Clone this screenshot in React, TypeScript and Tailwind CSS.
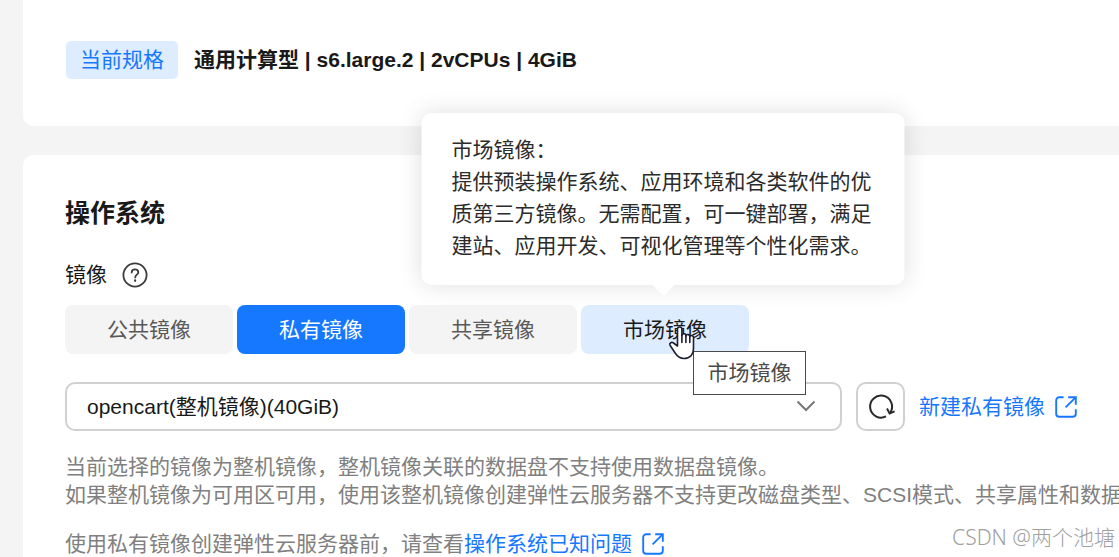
import { useState } from "react";

type ImageKind = { id: string; label: string };

const IMAGE_KINDS: ImageKind[] = [
  { id: "public", label: "公共镜像" },
  { id: "private", label: "私有镜像" },
  { id: "shared", label: "共享镜像" },
  { id: "market", label: "市场镜像" },
];

function HelpIcon() {
  return (
    <svg className="size-[26px]" viewBox="0 0 26 26" fill="none" stroke="#3c3c3c" strokeWidth="1.8" strokeLinecap="round">
      <circle cx="13" cy="13" r="11.6" />
      <path d="M9.7 10.6C9.7 8.6 11.1 7.4 13 7.4s3.3 1.2 3.3 3c0 2.2-3.1 2.4-3.1 5" />
      <path d="M13.1 18.4v.4" strokeWidth="2.2" />
    </svg>
  );
}

function RefreshIcon() {
  return (
    <svg className="size-[28px]" viewBox="0 0 28 28" fill="none" stroke="#2a2a2a" strokeWidth="2">
      <path d="M19 23.400A11 11 0 1 1 23.400 19.400" />
      <path d="M20 15.600L22.600 20.400L27.600 18.300" />
    </svg>
  );
}

function ExternalIcon() {
  return (
    <svg className="size-6 shrink-0" viewBox="0 0 24 24" fill="none" stroke="#1677ff" strokeWidth="1.9">
      <path d="M9.6 2.2H5.2a3 3 0 0 0-3 3v13.6a3 3 0 0 0 3 3h13.6a3 3 0 0 0 3-3v-4.6" />
      <path d="M14.2 2.2h7.6v7.6" />
      <path d="M21.6 2.4L11.6 12.4" />
    </svg>
  );
}

function HandCursor() {
  return (
    <svg className="pointer-events-none absolute left-[87px] top-[20px] z-20 h-[35px] w-[27px]" viewBox="0 0 27 35" fill="#fff" stroke="#1d1f33" strokeWidth="1.6" strokeLinejoin="round" strokeLinecap="round">
      <path d="M9.500 21V4.200a2.200 2.200 0 0 1 4.400 0V10.500a2 2 0 0 1 4 .600a2 2 0 0 1 3.900.900a1.900 1.900 0 0 1 3.700 1V23c0 6.500-3.500 10.500-9.500 10.500c-4.500 0-6.500-2-8.500-5L2 20.300c-1-2.300 1.700-3.800 3.500-2.300z" />
      <path d="M13.900 10.500v7M17.900 11.300v6.200M21.800 12.300v5.200" />
    </svg>
  );
}

function MarketPopover() {
  return (
    <div
      role="tooltip"
      className="absolute bottom-full left-[82px] z-10 mb-5 w-[483px] -translate-x-1/2 rounded-[10px] bg-white px-[30px] pb-[23px] pt-[21px] text-left leading-8 text-[#2b2b2b] shadow-[0_0_24px_rgba(0,0,0,0.13)]"
    >
      <p>市场镜像：</p>
      <p>提供预装操作系统、应用环境和各类软件的优质第三方镜像。无需配置，可一键部署，满足建站、应用开发、可视化管理等个性化需求。</p>
      <svg className="absolute left-1/2 top-full h-[11px] w-[22px] -translate-x-1/2" viewBox="0 0 22 11" fill="#fff">
        <path d="M0 0h22L11 11z" />
      </svg>
    </div>
  );
}

export default function App() {
  const [active, setActive] = useState("private");

  return (
    <div className="relative flex min-h-screen flex-col gap-[29px] overflow-hidden bg-[#f4f4f4] pl-[23px] font-['Liberation_Sans','Noto_Sans_CJK_SC',sans-serif] text-[21px] text-[#191919]">
      <section className="flex items-center gap-4 rounded-bl-[10px] bg-white pb-[47px] pl-[43px] pt-[41px]">
        <span className="rounded-[5px] bg-[#deecff] px-[14px] leading-[38px] text-[#1677ff]">当前规格</span>
        <strong className="font-bold leading-8">通用计算型 | s6.large.2 | 2vCPUs | 4GiB</strong>
      </section>

      <section className="grow rounded-tl-[10px] bg-white pl-[42px] pr-[41px] pt-[42px]">
        <h2 className="text-[25px] font-bold leading-8">操作系统</h2>

        <div className="mt-[33px] flex h-[26px] items-center gap-[15px]">
          <span id="image-label">镜像</span>
          <button type="button" aria-label="帮助">
            <HelpIcon />
          </button>
        </div>

        <div className="mt-[17px] flex gap-1" role="group" aria-labelledby="image-label">
          {IMAGE_KINDS.map(({ id, label }) => (
            <div key={id} className="relative">
              <button
                type="button"
                aria-pressed={active === id}
                onClick={() => setActive(id)}
                className={
                  "h-[49px] w-[168px] rounded-lg " +
                  (active === id
                    ? "bg-[#1677ff] text-white"
                    : id === "market"
                      ? "bg-[#deecff] text-[#191919]"
                      : "bg-[#f4f4f4] text-[#595959]")
                }
              >
                {label}
              </button>
              {id === "market" && (
                <>
                  <MarketPopover />
                  <HandCursor />
                  <div className="absolute left-28 top-[46px] z-10 w-[113px] whitespace-nowrap border border-[#4a4a4a] bg-white text-center leading-[42px] text-[#4a4a4a]">
                    市场镜像
                  </div>
                </>
              )}
            </div>
          ))}
        </div>

        <div className="mt-7 flex items-center gap-[14px]">
          <div className="relative grow">
            <select
              aria-labelledby="image-label"
              className="block h-[49px] w-full appearance-none rounded-[10px] border-2 border-[#d0d0d0] bg-white pl-5 pr-14"
            >
              <option>opencart(整机镜像)(40GiB)</option>
            </select>
            <svg className="pointer-events-none absolute right-[26px] top-[18px] h-3 w-5" viewBox="0 0 20 12" fill="none" stroke="#777" strokeWidth="2">
              <path d="M1.500 1.500L10 10l8.500-8.500" />
            </svg>
          </div>
          <button
            type="button"
            aria-label="刷新"
            className="flex size-[49px] items-center justify-center rounded-[10px] border-2 border-[#d0d0d0] bg-white"
          >
            <RefreshIcon />
          </button>
          <a href="#create" className="flex items-center gap-[9px] whitespace-nowrap text-[#1677ff]">
            新建私有镜像
            <ExternalIcon />
          </a>
        </div>

        <p className="mt-[22px] whitespace-nowrap leading-7 text-[#808080]">
          当前选择的镜像为整机镜像，整机镜像关联的数据盘不支持使用数据盘镜像。
          <br />
          如果整机镜像为可用区可用，使用该整机镜像创建弹性云服务器不支持更改磁盘类型、SCSI模式、共享属性和数据
        </p>

        <p className="mt-[23px] flex h-6 items-center whitespace-nowrap leading-6 text-[#808080]">
          使用私有镜像创建弹性云服务器前，请查看
          <a href="#issues" className="flex items-center gap-[9px] text-[#1677ff]">
            操作系统已知问题
            <ExternalIcon />
          </a>
        </p>
      </section>

      <span className="absolute bottom-1 right-1 font-['Noto_Sans','Noto_Sans_CJK_SC',sans-serif] text-[21px] font-light leading-8 text-[#a0a0a0] [text-shadow:0_0_2px_#fff]">
        CSDN @两个池塘
      </span>
    </div>
  );
}
